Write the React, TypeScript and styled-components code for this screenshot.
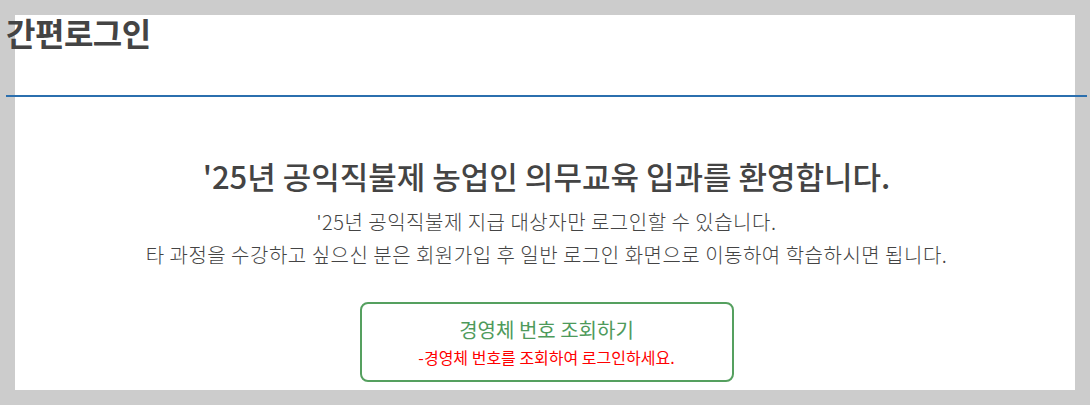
import styled, { createGlobalStyle } from "styled-components";

const GlobalStyle = createGlobalStyle`
    html, body {
        margin: 0;
        padding: 0;
        background-color: #cccccc;
        font-family: "Noto Sans CJK KR", "Noto Sans", sans-serif;
    }
`;

const Page = styled.div`
    width: 1090px;
    height: 405px;
    padding: 15px 15px 0 15px;
    box-sizing: border-box;
    overflow: hidden;
`;

const Panel = styled.div`
    background-color: #ffffff;
    height: 375px;
    display: flex;
    flex-direction: column;
`;

const Header = styled.div`
    margin: 0 -12px 0 -9px;
    height: 82px;
    border-bottom: 2px solid #2b6fae;
    box-sizing: border-box;
`;

const Title = styled.h1`
    margin: 0;
    font-size: 32px;
    font-weight: 700;
    color: #444444;
    line-height: 34px;
    letter-spacing: -0.5px;
`;

const Body = styled.div`
    display: flex;
    flex-direction: column;
    align-items: center;
    padding-top: 59px;
    padding-left: 3px;
`;

const Welcome = styled.h2`
    margin: 0;
    font-size: 31px;
    font-weight: 500;
    color: #444444;
    line-height: 40px;
`;

const Notice = styled.p`
    margin: 9px 0 0 0;
    font-size: 20px;
    font-weight: 300;
    color: #444444;
    line-height: 33px;
    letter-spacing: 0.5px;
    text-align: center;
`;

const LookupButton = styled.button`
    margin-top: 31px;
    width: 374px;
    height: 80px;
    border: 2px solid #55a05f;
    border-radius: 8px;
    background-color: #ffffff;
    display: flex;
    flex-direction: column;
    align-items: center;
    justify-content: center;
    gap: 1px;
    padding: 0;
    font-family: inherit;
    cursor: pointer;
`;

const ButtonLabel = styled.span`
    font-size: 20px;
    color: #4e9a5b;
    line-height: 28px;
`;

const ButtonHint = styled.span`
    font-size: 16px;
    color: #ff0000;
    line-height: 24px;
`;

function App() {
    return (
        <>
            <GlobalStyle />
            <Page>
                <Panel>
                    <Header>
                        <Title>간편로그인</Title>
                    </Header>
                    <Body>
                        <Welcome>'25년 공익직불제 농업인 의무교육 입과를 환영합니다.</Welcome>
                        <Notice>
                            '25년 공익직불제 지급 대상자만 로그인할 수 있습니다.
                            <br />
                            타 과정을 수강하고 싶으신 분은 회원가입 후 일반 로그인 화면으로 이동하여 학습하시면 됩니다.
                        </Notice>
                        <LookupButton>
                            <ButtonLabel>경영체 번호 조회하기</ButtonLabel>
                            <ButtonHint>-경영체 번호를 조회하여 로그인하세요.</ButtonHint>
                        </LookupButton>
                    </Body>
                </Panel>
            </Page>
        </>
    );
}

export default App;
